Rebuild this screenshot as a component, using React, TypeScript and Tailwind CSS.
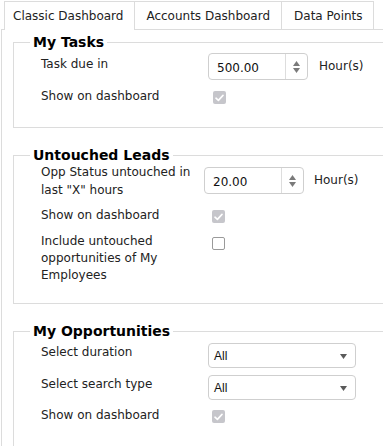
import React from "react";

const font = { fontFamily: '"DejaVu Sans", Verdana, sans-serif' };

function Spin() {
  return (
    <div className="w-[22px] h-full border-l border-[#ddd] flex flex-col items-center justify-center gap-[2px]">
      <svg width="7" height="5" viewBox="0 0 7 5">
        <path d="M3.5 0 L7 5 L0 5 Z" fill="#7a7a7a" />
      </svg>
      <svg width="7" height="5" viewBox="0 0 7 5">
        <path d="M0 0 L7 0 L3.5 5 Z" fill="#7a7a7a" />
      </svg>
    </div>
  );
}

function NumberBox({ value }: { value: string }) {
  return (
    <div className="w-[100px] h-[27px] border border-[#cfcfcf] rounded-[4px] flex bg-white">
      <div className="flex-1 pl-[8px] pt-[2px] flex items-center text-[12px] text-[#111]">{value}</div>
      <Spin />
    </div>
  );
}

function SelectBox() {
  return (
    <div className="w-[148px] h-[25px] border border-[#cfcfcf] rounded-[4px] flex items-center justify-between pl-[5px] pr-[8px] bg-white">
      <span className="text-[12px] text-[#111] pt-[1px]" style={{ fontFamily: '"Liberation Sans", Arial, sans-serif' }}>
        All
      </span>
      <svg width="7" height="5" viewBox="0 0 7 5" className="mt-[2px]">
        <path d="M0 0 L7 0 L3.5 5 Z" fill="#5a5a5a" />
      </svg>
    </div>
  );
}

function Check({ checked }: { checked: boolean }) {
  if (checked) {
    return (
      <div className="w-[13px] h-[13px] rounded-[2px] bg-[#c6c6cb] flex items-center justify-center">
        <svg width="9" height="8" viewBox="0 0 9 8">
          <path d="M1 4.2 L3.4 6.4 L8 1.4" fill="none" stroke="#fff" strokeWidth="1.6" strokeLinecap="round" strokeLinejoin="round" />
        </svg>
      </div>
    );
  }
  return <div className="w-[13px] h-[13px] rounded-[2px] border border-[#9a9a9a] bg-white" />;
}

function Legend({ children }: { children: React.ReactNode }) {
  return (
    <legend className="ml-[16px] px-[3px] text-[14px] font-bold leading-[16px] text-black">{children}</legend>
  );
}

export default function App() {
  return (
    <div className="w-[383px] h-[446px] overflow-hidden bg-white text-[#222]" style={font}>
      <div className="ml-[1px]">
        <div className="pt-[1px] pl-[3px] flex items-start border-b border-[#dcdcdc]">
          <div className="relative z-10 h-[29px] -mb-[1px] bg-white border-t border-l border-[#dcdcdc] pl-[8px] pr-[11px] flex items-center pb-[1px] text-[12px] text-[#222]">
            Classic Dashboard
          </div>
          <div className="h-[28px] border-t border-l border-[#dcdcdc] px-[11px] flex items-center text-[12px] text-[#222]">
            Accounts Dashboard
          </div>
          <div className="h-[28px] border-t border-l border-r border-[#dcdcdc] pl-[12px] pr-[10px] flex items-center text-[12px] text-[#222]">
            Data Points
          </div>
        </div>

        <div className="border-l border-[#dcdcdc] pl-[11px] pt-[4px] h-[420px]">
          <fieldset className="border border-[#dcdcdc] w-[400px]">
            <Legend>My Tasks</Legend>
            <div className="pl-[27px] pt-[3px] pb-[22px] text-[12px]">
              <div className="flex items-start">
                <div className="w-[167px] pt-[3px] leading-[17px]">Task due in</div>
                <NumberBox value="500.00" />
                <div className="self-center ml-[11px] leading-[17px]">Hour(s)</div>
              </div>
              <div className="flex items-start mt-[8px]">
                <div className="w-[171px] leading-[17px]">Show on dashboard</div>
                <div className="mt-[3px] ml-[1px]">
                  <Check checked />
                </div>
              </div>
            </div>
          </fieldset>

          <fieldset className="border border-[#dcdcdc] w-[400px] mt-[19px]">
            <Legend>Untouched Leads</Legend>
            <div className="pl-[27px] pb-[19px] text-[12px]">
              <div className="flex items-start">
                <div className="w-[163px] pr-[8px] leading-[18px]">Opp Status untouched in last "X" hours</div>
                <div className="mt-[4px]">
                  <NumberBox value="20.00" />
                </div>
                <div className="ml-[10px] mt-[9px] leading-[17px]">Hour(s)</div>
              </div>
              <div className="flex items-start mt-[8px]">
                <div className="w-[171px] leading-[17px]">Show on dashboard</div>
                <div className="mt-[3px]">
                  <Check checked />
                </div>
              </div>
              <div className="flex items-start mt-[9px]">
                <div className="w-[171px] pr-[16px] leading-[17px]">Include untouched opportunities of My Employees</div>
                <div className="mt-[4px]">
                  <Check checked={false} />
                </div>
              </div>
            </div>
          </fieldset>

          <fieldset className="border border-[#dcdcdc] w-[400px] mt-[19px]">
            <Legend>My Opportunities</Legend>
            <div className="pl-[27px] pt-[4px] pb-[30px] text-[12px]">
              <div className="flex items-start">
                <div className="w-[167px] mt-[1px] leading-[17px]">Select duration</div>
                <SelectBox />
              </div>
              <div className="flex items-start mt-[7px]">
                <div className="w-[167px] mt-[1px] leading-[17px]">Select search type</div>
                <SelectBox />
              </div>
              <div className="flex items-start mt-[7px]">
                <div className="w-[171px] leading-[17px]">Show on dashboard</div>
                <div className="mt-[3px]">
                  <Check checked />
                </div>
              </div>
            </div>
          </fieldset>
        </div>
      </div>
    </div>
  );
}
